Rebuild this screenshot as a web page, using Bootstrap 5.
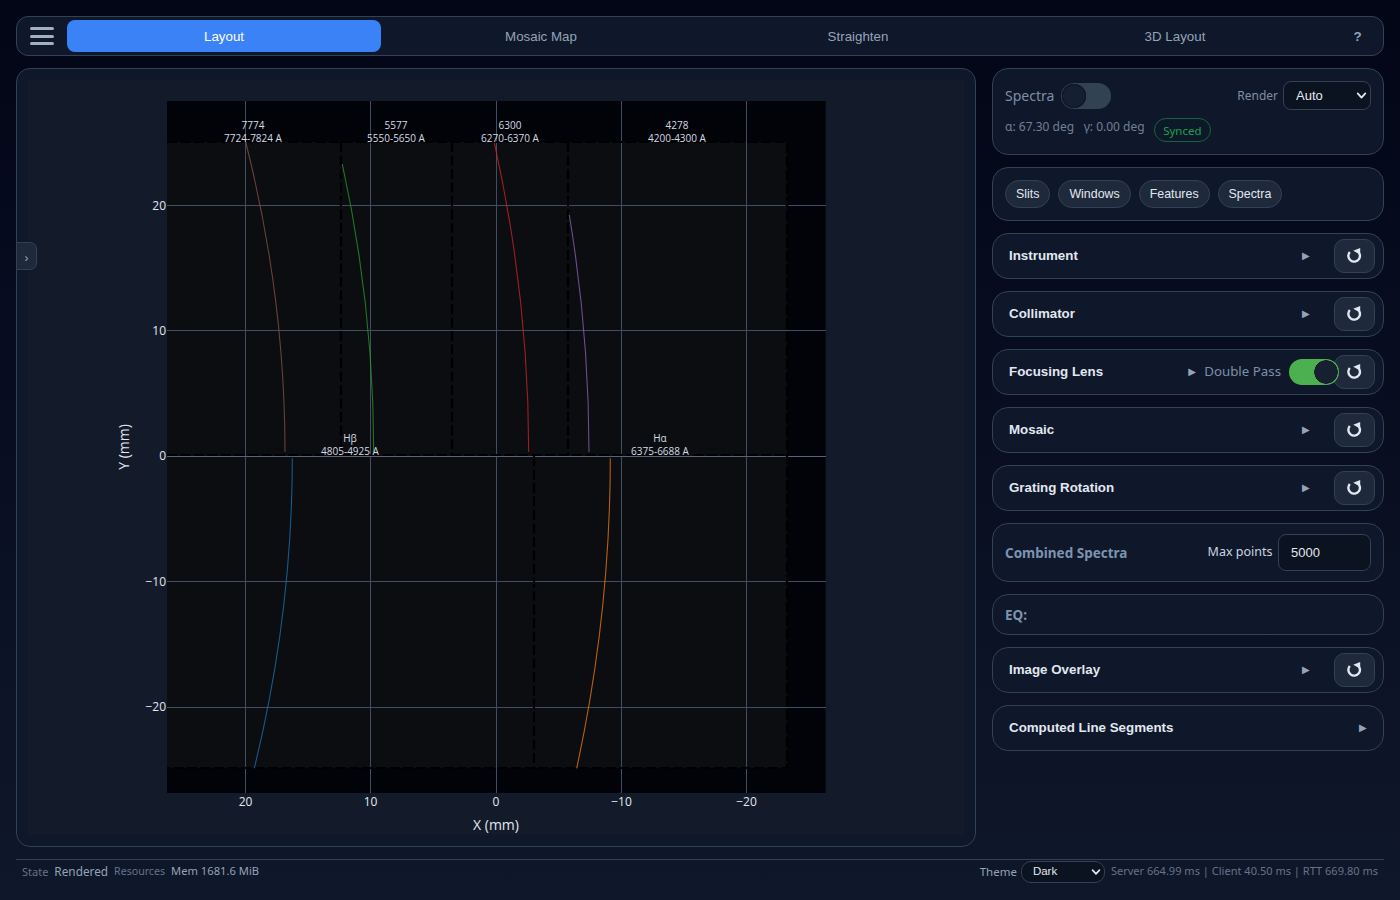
<!DOCTYPE html>
<html lang="en">
<head>
    <meta charset="UTF-8">
    <meta name="viewport" content="width=device-width, initial-scale=1.0">
    <title>Spectrograph Layout</title>
    <link href="https://cdn.jsdelivr.net/npm/bootstrap@5.3.0/dist/css/bootstrap.min.css" rel="stylesheet">
    <style>
        html, body { height: 100%; }
        body {
            margin: 0;
            padding: 16px 16px 0;
            background: linear-gradient(180deg, #020617 0%, #0f172a 100%);
            font-family: "Noto Sans", sans-serif;
            color: #cbd5e1;
            overflow: hidden;
        }
        .top-bar {
            height: 40px;
            padding: 0 3px 0 13px;
            background: #0f172a;
            border: 1px solid #334155;
            border-radius: 12px;
        }
        .burger { width: 24px; margin-right: 13px; flex: none; }
        .burger span { display: block; height: 3px; margin: 4.5px 0; border-radius: 2px; background: #a3afc2; }
        .tab-row { gap: 3px; }
        .tab-btn {
            flex: 1 1 0;
            height: 32px;
            padding: 0;
            font: 13.33px "Liberation Sans", sans-serif;
            color: #94a3b8;
            border: 0;
            border-radius: 8px;
        }
        .tab-btn.on { background: #3b82f6; color: #fff; }
        .tab-help { flex: 0 0 45px; font-weight: 700; }

        .plot-panel {
            width: 960px;
            height: 779px;
            padding: 11px;
            background: #0f172a;
            border: 1px solid #334155;
            border-radius: 14px;
            position: relative;
        }
        .plot-inner { width: 936px; height: 755px; background: #131b2b; }
        .plot-inner svg { display: block; }
        .side-tab {
            position: absolute;
            left: -1px;
            top: 173px;
            width: 21px;
            height: 28px;
            background: #1e293b;
            border: 1px solid #334155;
            border-radius: 0 7px 7px 0;
            color: #94a3b8;
            font-size: 13px;
            line-height: 28px;
            text-align: center;
        }
        .tick { font: 12px "Open Sans", sans-serif; fill: #e2e8f0; }
        .note { font: 10px "Open Sans", sans-serif; fill: #d5dbe5; text-anchor: middle; }
        .axis-name { font: 14px "Open Sans", sans-serif; fill: #e2e8f0; text-anchor: middle; }

        .side-col { width: 392px; gap: 12px; }
        .side-card {
            background: #0f172a;
            border: 1px solid #334155;
            border-radius: 16px;
            color: #cbd5e1;
            flex-direction: row;
        }
        .status-card { height: 87px; padding: 12px; display: block; }
        .spectra-head { gap: 7px; }
        .muted-label { color: #7d8fa8; font-size: 14px; }
        .render-label { color: #7d8fa8; font-size: 12px; margin-right: 5px; }
        .angle-text { color: #6f8098; font-size: 12px; position: relative; top: -3px; }
        .angle-gap { margin-left: 9.5px; }
        .synced-pill {
            height: 24px;
            padding: 0 8.5px;
            line-height: 23px;
            color: #16a34a;
            border: 1px solid #166534;
            border-radius: 12px;
            font-size: 11.5px;
            margin-left: 9px;
        }
        .dark-select {
            font-family: "Liberation Sans", sans-serif;
            color: #e2e8f0;
            background-color: #0b1220;
            background-image: url("data:image/svg+xml,%3csvg xmlns='http://www.w3.org/2000/svg' viewBox='0 0 16 16'%3e%3cpath fill='none' stroke='%23e2e8f0' stroke-linecap='round' stroke-linejoin='round' stroke-width='2.6' d='m2.5 5 5.5 6 5.5-6'/%3e%3c/svg%3e");
            border: 1px solid #334155;
        }
        .render-select {
            width: 88px;
            height: 29px;
            padding: 0 20px 0 12px;
            font-size: 13px;
            border-radius: 8px;
            background-position: right 3px center;
            background-size: 11px 11px;
        }
        .switch-box { margin: 0; padding: 0; min-height: 0; display: flex; }
        .switch-box .form-check-input {
            width: 50px;
            height: 26px;
            margin: 0;
            border: 0;
            border-radius: 13px;
            background-color: #334155;
            background-position: 0 0;
            background-size: 100% 100%;
            background-image: radial-gradient(circle at 13px 13px, #14202f 0 10.5px, #0f172a 11px 12px, transparent 12.5px);
        }
        .switch-box .form-check-input:checked {
            background-color: #4caf50;
            background-image: radial-gradient(circle at 37px 13px, #172031 0 11.5px, transparent 12px);
            position: relative;
            z-index: 1;
        }
        .chips-card { height: 54px; padding: 12px; gap: 8px; }
        .chip-btn {
            height: 28px;
            padding: 0 10px;
            font: 12.4px "Liberation Sans", sans-serif;
            color: #e2e8f0;
            background: #1e293b;
            border: 1px solid #334155;
            border-radius: 14px;
        }
        .fold-row { height: 46px; padding: 0 8px 0 16px; align-items: center; }
        .fold-title { font: 700 13.33px "Liberation Sans", sans-serif; color: #e2e8f0; margin-bottom: 2px; }
        .fold-caret { font: 10px "DejaVu Sans", sans-serif; color: #94a3b8; width: 8px; margin-bottom: 1px; }
        .caret-spaced { margin-right: 24px; }
        .reset-btn {
            width: 41px;
            height: 34px;
            padding: 0 1px 2px 0;
            display: flex;
            align-items: center;
            justify-content: center;
            background: #1e293b;
            border: 1px solid #334155;
            border-radius: 10px;
            color: #e2e8f0;
        }
        .reset-ico { width: 16px; height: 16px; }
        .pass-text { margin: 0 8px 1px 8px; font-size: 13.3px; }
        .pass-switch { margin-right: -5px; }
        .plain-title { font-weight: 700; font-size: 13.5px; color: #7d93b0; margin-top: 2px; }
        .combined-card { height: 59px; padding: 0 12px; align-items: center; }
        .points-label { font-size: 12.5px; color: #cbd5e1; margin-right: 5.5px; }
        .points-input {
            width: 93px;
            height: 37px;
            padding: 0 12px;
            font: 13px "Liberation Sans", sans-serif;
            color: #e2e8f0;
            background: #0b1220;
            border: 1px solid #334155;
            border-radius: 8px;
        }
        .eq-card { height: 41px; padding: 0 12px; align-items: center; }

        .foot-bar {
            margin-top: 12px;
            padding: 1px 6px 0;
            border-top: 1px solid #334155;
            font-size: 11px;
            color: #64748b;
        }
        .foot-value { color: #94a3b8; font-size: 11.8px; margin-left: 6px; }
        .foot-res { font-size: 10.6px; margin-left: 6px; }
        .foot-mem { color: #94a3b8; font-size: 11.2px; margin-left: 6px; margin-top: -2px; }
        .foot-timing { font-size: 11.04px; margin-top: -2px; }
        .theme-label { color: #94a3b8; font-size: 11.5px; margin-right: 4px; }
        .theme-select {
            width: 84px;
            height: 22px;
            padding: 0 18px 0 11px;
            font-size: 11.5px;
            border-radius: 10px;
            background-position: right 3px center;
            background-size: 10px 10px;
            margin-right: 6px;
        }
    </style>
</head>
<body>

<svg width="0" height="0" class="position-absolute">
    <symbol id="reset-icon" viewBox="0 0 16 16">
        <path d="M3.8 5A5.8 5.8 0 1 0 11.2 3.9" fill="none" stroke="currentColor" stroke-width="2.4"/>
        <path d="M14.2 .9 7.2 3.8 14.2 7.4Z" fill="currentColor"/>
    </symbol>
</svg>

<div class="top-bar d-flex align-items-center">
    <div class="burger"><span></span><span></span><span></span></div>
    <div class="d-flex flex-grow-1 tab-row">
        <button class="btn tab-btn on">Layout</button>
        <button class="btn tab-btn">Mosaic Map</button>
        <button class="btn tab-btn">Straighten</button>
        <button class="btn tab-btn">3D Layout</button>
        <button class="btn tab-btn tab-help">?</button>
    </div>
</div>

<div class="d-flex gap-3 mt-2 pt-1">
    <div class="plot-panel">
        <div class="plot-inner">
            <svg width="936" height="755" viewBox="28 80 936 755" xmlns="http://www.w3.org/2000/svg">
                <rect x="167" y="101" width="658.6" height="692" fill="#020308"/>
                <rect x="167" y="142" width="620" height="626" fill="#0b0d11"/>
                <g stroke="#414d63" stroke-width="1" shape-rendering="crispEdges">
                    <path d="M245.5 101V793M370.5 101V793M496.5 101V793M621.5 101V793M746.5 101V793"/>
                    <path d="M167 205.5H825.6M167 330.5H825.6M167 581.5H825.6M167 707.5H825.6"/>
                    <path d="M167 456.5H825.6" stroke="#56637a"/>
                </g>
                <g stroke="#000" stroke-width="2.2" stroke-dasharray="10 3.5" fill="none">
                    <path d="M167 142H787V768H167"/>
                    <path d="M167 455H787"/>
                    <path d="M341 142V455M452 142V455M568 142V455M534 456V768"/>
                </g>
                <g fill="none" stroke-width="1.1" opacity=".72">
                    <path stroke="#8c564b" d="M285 452Q285 297 245.7 142"/>
                    <path stroke="#2ca02c" d="M373.7 452Q373.7 308 342.3 164"/>
                    <path stroke="#d62728" d="M528.7 452Q528.7 297.3 494.3 142.7"/>
                    <path stroke="#9467bd" d="M589 452Q589 333.5 569.3 215"/>
                    <path stroke="#1f77b4" d="M292.3 458.3Q292.3 613.3 254.3 768.3"/>
                    <path stroke="#ff7f0e" d="M610.3 458.3Q610.3 613.3 576.7 768.3"/>
                </g>
                <g>
                    <text class="note" x="253" y="129">7774</text>
                    <text class="note" x="253" y="142">7724-7824 A</text>
                    <text class="note" x="396" y="129">5577</text>
                    <text class="note" x="396" y="142">5550-5650 A</text>
                    <text class="note" x="510" y="129">6300</text>
                    <text class="note" x="510" y="142">6270-6370 A</text>
                    <text class="note" x="677" y="129">4278</text>
                    <text class="note" x="677" y="142">4200-4300 A</text>
                    <text class="note" x="350" y="442">Hβ</text>
                    <text class="note" x="350" y="455">4805-4925 A</text>
                    <text class="note" x="660" y="442">Hα</text>
                    <text class="note" x="660" y="455">6375-6688 A</text>
                </g>
                <g class="tick" text-anchor="end">
                    <text x="166" y="210">20</text>
                    <text x="166" y="335">10</text>
                    <text x="166" y="460">0</text>
                    <text x="166" y="586">−10</text>
                    <text x="166" y="711">−20</text>
                </g>
                <g class="tick" text-anchor="middle">
                    <text x="245.5" y="806">20</text>
                    <text x="370.5" y="806">10</text>
                    <text x="496" y="806">0</text>
                    <text x="621.5" y="806">−10</text>
                    <text x="746.5" y="806">−20</text>
                </g>
                <text class="axis-name" x="496" y="830">X (mm)</text>
                <text class="axis-name" transform="translate(129 447) rotate(-90)">Y (mm)</text>
            </svg>
        </div>
        <div class="side-tab">›</div>
    </div>

    <div class="side-col d-flex flex-column">
        <div class="card side-card status-card">
            <div class="d-flex align-items-center justify-content-between">
                <div class="d-flex align-items-center spectra-head">
                    <span class="muted-label">Spectra</span>
                    <div class="form-check form-switch switch-box"><input class="form-check-input" type="checkbox"></div>
                </div>
                <div class="d-flex align-items-center">
                    <span class="render-label">Render</span>
                    <select class="form-select dark-select render-select"><option>Auto</option></select>
                </div>
            </div>
            <div class="d-flex align-items-center mt-2">
                <span class="angle-text">α: 67.30 deg</span>
                <span class="angle-text angle-gap">γ: 0.00 deg</span>
                <span class="synced-pill">Synced</span>
            </div>
        </div>

        <div class="card side-card chips-card">
            <button class="btn chip-btn">Slits</button>
            <button class="btn chip-btn">Windows</button>
            <button class="btn chip-btn">Features</button>
            <button class="btn chip-btn">Spectra</button>
        </div>

        <div class="card side-card fold-row">
            <span class="fold-title me-auto">Instrument</span>
            <span class="fold-caret caret-spaced">▶</span>
            <button class="btn reset-btn"><svg class="reset-ico"><use href="#reset-icon"/></svg></button>
        </div>
        <div class="card side-card fold-row">
            <span class="fold-title me-auto">Collimator</span>
            <span class="fold-caret caret-spaced">▶</span>
            <button class="btn reset-btn"><svg class="reset-ico"><use href="#reset-icon"/></svg></button>
        </div>
        <div class="card side-card fold-row">
            <span class="fold-title me-auto">Focusing Lens</span>
            <span class="fold-caret">▶</span>
            <span class="muted-label pass-text">Double Pass</span>
            <div class="form-check form-switch switch-box pass-switch"><input class="form-check-input" type="checkbox" checked></div>
            <button class="btn reset-btn"><svg class="reset-ico"><use href="#reset-icon"/></svg></button>
        </div>
        <div class="card side-card fold-row">
            <span class="fold-title me-auto">Mosaic</span>
            <span class="fold-caret caret-spaced">▶</span>
            <button class="btn reset-btn"><svg class="reset-ico"><use href="#reset-icon"/></svg></button>
        </div>
        <div class="card side-card fold-row">
            <span class="fold-title me-auto">Grating Rotation</span>
            <span class="fold-caret caret-spaced">▶</span>
            <button class="btn reset-btn"><svg class="reset-ico"><use href="#reset-icon"/></svg></button>
        </div>

        <div class="card side-card combined-card">
            <span class="plain-title me-auto">Combined Spectra</span>
            <span class="points-label">Max points</span>
            <input class="form-control points-input" type="text" value="5000">
        </div>

        <div class="card side-card eq-card">
            <span class="plain-title">EQ:</span>
        </div>

        <div class="card side-card fold-row">
            <span class="fold-title me-auto">Image Overlay</span>
            <span class="fold-caret caret-spaced">▶</span>
            <button class="btn reset-btn"><svg class="reset-ico"><use href="#reset-icon"/></svg></button>
        </div>
        <div class="card side-card fold-row">
            <span class="fold-title me-auto">Computed Line Segments</span>
            <span class="fold-caret me-2">▶</span>
        </div>
    </div>
</div>

<div class="foot-bar d-flex align-items-center">
    <span>State</span>
    <span class="foot-value">Rendered</span>
    <span class="foot-res">Resources</span>
    <span class="foot-mem me-auto">Mem 1681.6 MiB</span>
    <span class="theme-label">Theme</span>
    <select class="form-select dark-select theme-select"><option>Dark</option></select>
    <span class="foot-timing">Server 664.99 ms | Client 40.50 ms | RTT 669.80 ms</span>
</div>

<script src="https://cdn.jsdelivr.net/npm/bootstrap@5.3.0/dist/js/bootstrap.bundle.min.js"></script>
</body>
</html>
